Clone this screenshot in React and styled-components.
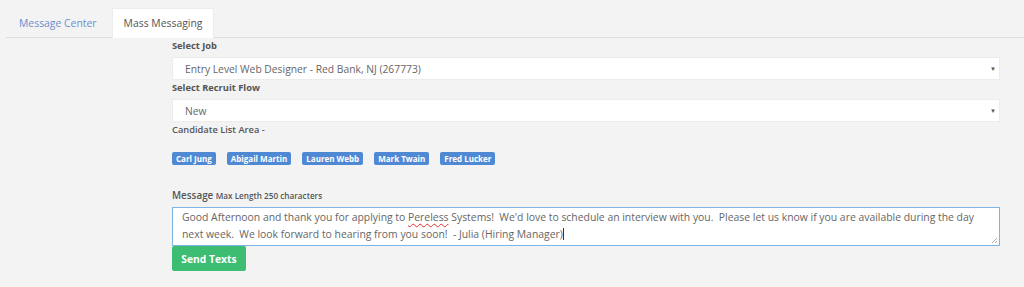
import React from "react";
import styled, { createGlobalStyle } from "styled-components";

const Global = createGlobalStyle`
  html, body { margin: 0; padding: 0; background: #f3f3f3; }
  body { font-family: "Open Sans", "Liberation Sans", sans-serif; color: #555; }
`;

const Page = styled.div`
  width: 1024px;
  height: 287px;
  background: #f3f3f3;
  padding-top: 8px;
  box-sizing: border-box;
`;

const TabBar = styled.div`
  display: flex;
  margin-left: 6px;
  border-bottom: 1px solid #dedede;
  height: 29px;
`;

const Tab = styled.div`
  padding: 0 ${(p) => (p.$active ? 11 : 12)}px;
  margin-right: 2px;
  height: 30px;
  line-height: 28px;
  font-size: 10.4px;
  color: ${(p) => (p.$active ? "#555" : "#6d8ecb")};
  background: ${(p) => (p.$active ? "#fff" : "transparent")};
  border: 1px solid ${(p) => (p.$active ? "#ececec" : "transparent")};
  border-bottom: none;
  box-sizing: border-box;
`;

const Form = styled.div`
  margin-left: 172px;
  width: 828px;
  display: flex;
  flex-direction: column;
`;

const Label = styled.div`
  font-size: 9.3px;
  font-weight: ${(p) => p.$weight || 700};
  line-height: 16px;
  color: #555;
  margin-top: ${(p) => p.$mt || 0}px;
  margin-bottom: 3px;
`;

const Big = styled.span`
  font-size: 9.9px;
`;

const Small = styled.span`
  font-size: 8.2px;
  font-weight: 600;
`;

const Select = styled.div`
  height: 23px;
  background: #fff;
  border: 1px solid #ececec;
  box-sizing: border-box;
  display: flex;
  align-items: center;
  justify-content: space-between;
  padding: 0 3px 0 12px;
  font-size: 10.3px;
  color: #666;
`;

const Caret = styled.span`
  font-size: 6px;
  color: #555;
`;

const Tags = styled.div`
  display: flex;
  gap: 11px;
  margin-top: 11px;
`;

const Tag = styled.span`
  background: #4f89d4;
  color: #fff;
  font-size: 8px;
  font-weight: 700;
  height: 13px;
  line-height: 13px;
  padding: 0 4px;
  border-radius: 2px;
`;

const Area = styled.div`
  position: relative;
  height: 39px;
  background: #fff;
  border: 1px solid #7fb5e6;
  box-sizing: border-box;
  padding: 1px 9px;
  font-size: 10.4px;
  line-height: 17px;
  color: #666;
  white-space: pre-wrap;
`;

const Misspelled = styled.span`
  text-decoration: underline wavy #e03030;
  text-decoration-thickness: 1px;
  text-underline-offset: 2px;
`;

const Cursor = styled.span`
  display: inline-block;
  width: 1px;
  height: 12px;
  background: #333;
  vertical-align: -2px;
`;

const Grip = styled.svg`
  position: absolute;
  right: 1px;
  bottom: 1px;
`;

const Button = styled.button`
  align-self: flex-start;
  height: 25px;
  width: 74px;
  border: none;
  border-radius: 2px;
  background: #3cbd72;
  color: #fff;
  font-family: "Open Sans", "Liberation Sans", sans-serif;
  font-weight: 700;
  font-size: 10.3px;
  padding: 0;
`;

const names = ["Carl Jung", "Abigail Martin", "Lauren Webb", "Mark Twain", "Fred Lucker"];

export default function App() {
  return (
    <Page>
      <Global />
      <TabBar>
        <Tab>Message Center</Tab>
        <Tab $active>Mass Messaging</Tab>
      </TabBar>
      <Form>
        <Label>Select Job</Label>
        <Select>
          <span>Entry Level Web Designer - Red Bank, NJ (267773)</span>
          <Caret>▼</Caret>
        </Select>
        <Label>Select Recruit Flow</Label>
        <Select>
          <span>New</span>
          <Caret>▼</Caret>
        </Select>
        <Label $weight={600}>Candidate List Area -</Label>
        <Tags>
          {names.map((n) => (
            <Tag key={n}>{n}</Tag>
          ))}
        </Tags>
        <Label $mt={22} $weight={600}>
          <Big>Message</Big> <Small>Max Length 250 characters</Small>
        </Label>
        <Area>
          Good Afternoon and thank you for applying to <Misspelled>Pereless</Misspelled> Systems!  We'd love to schedule an interview with you.  Please let us know if you are available during the day next week.  We look forward to hearing from you soon!  - Julia (Hiring Manager)<Cursor />
          <Grip width="7" height="7" viewBox="0 0 7 7">
            <line x1="6" y1="1" x2="1" y2="6" stroke="#999" strokeWidth="0.8" />
            <line x1="6" y1="4" x2="4" y2="6" stroke="#999" strokeWidth="0.8" />
          </Grip>
        </Area>
        <Button>Send Texts</Button>
      </Form>
    </Page>
  );
}
